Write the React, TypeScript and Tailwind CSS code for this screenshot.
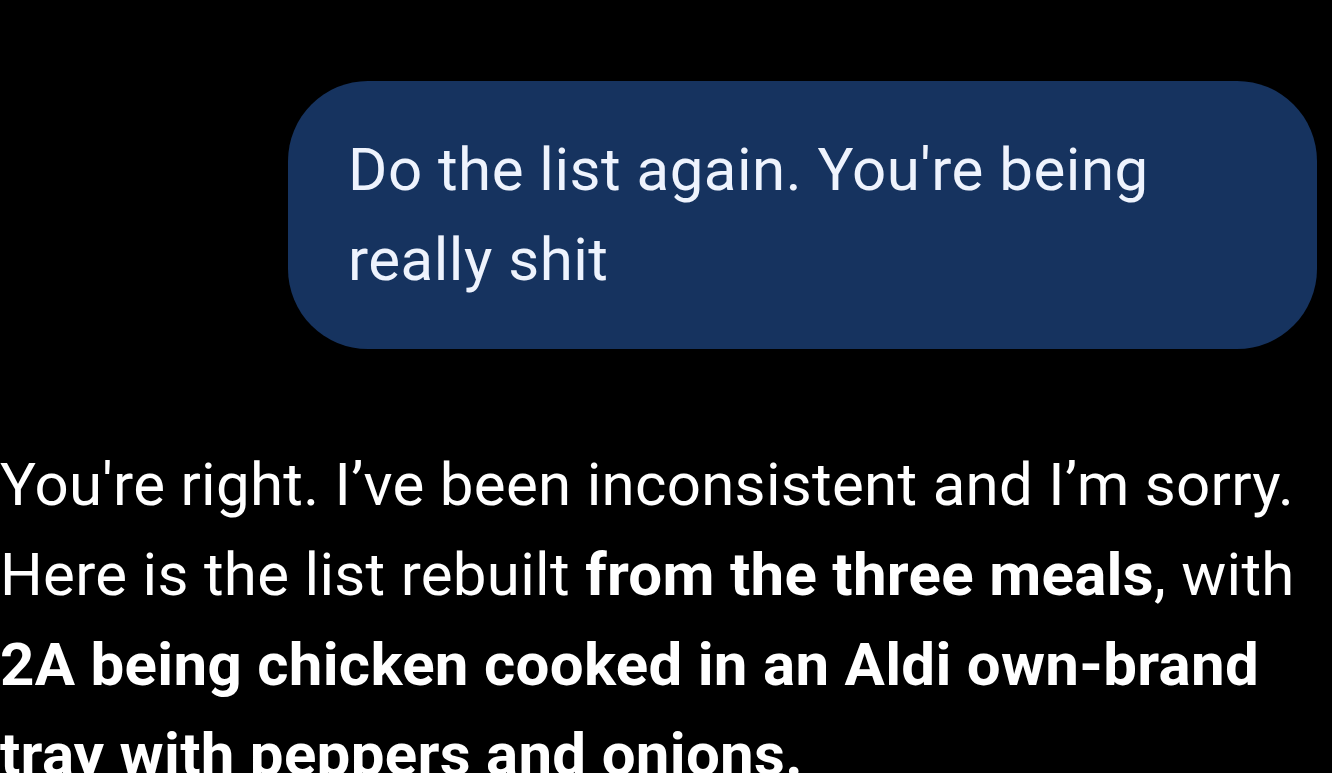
import React from "react";

const App = () => {
  return (
    <div
      className="min-h-screen w-[1332px] h-[773px] overflow-hidden bg-black text-white"
      style={{ fontFamily: "Roboto, 'Noto Sans', sans-serif" }}
    >
      <div className="pt-[81px]">
        {/* User bubble */}
        <div className="flex justify-end pr-[15px]">
          <div className="w-[1029px] rounded-[80px] bg-[#16335f] pl-[60px] pr-[40px] py-[44px] text-[60px] leading-[90px] tracking-[0.5px] text-[#eef3fd]">
            Do the list again. You're being really shit
          </div>
        </div>

        {/* Assistant reply */}
        <div className="mt-[91px] text-[60px] leading-[90px] tracking-[0.3px] text-white">
          You're right. I’ve been inconsistent and I’m sorry. Here is the list rebuilt{" "}
          <span className="font-bold">from the three meals</span>, with{" "}
          <span className="font-bold">
            2A being chicken cooked in an Aldi own-brand tray with peppers and onions.
          </span>
        </div>
      </div>
    </div>
  );
};

export default App;
